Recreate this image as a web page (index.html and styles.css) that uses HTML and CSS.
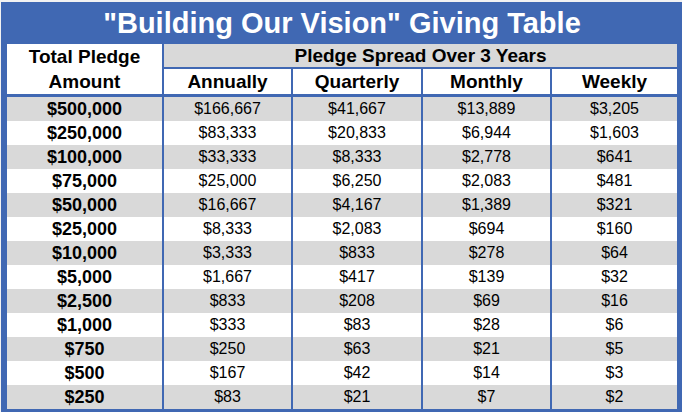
FILE: index.html
```html
<!DOCTYPE html>
<html lang="en">
<head>
<meta charset="utf-8">
<title>Building Our Vision Giving Table</title>
<link rel="stylesheet" href="styles.css">
</head>
<body>
<div class="sheet">
  <h1 class="title">"Building Our Vision" Giving Table</h1>
  <div class="head">
    <div class="h-total">Total Pledge<br>Amount</div>
    <div class="h-spread">Pledge Spread Over 3 Years</div>
    <div class="h-sub">Annually</div>
    <div class="h-sub">Quarterly</div>
    <div class="h-sub">Monthly</div>
    <div class="h-sub">Weekly</div>
  </div>
  <div class="body">
    <div class="row odd"><div class="c amt">$500,000</div><div class="c">$166,667</div><div class="c">$41,667</div><div class="c">$13,889</div><div class="c">$3,205</div></div>
    <div class="row"><div class="c amt">$250,000</div><div class="c">$83,333</div><div class="c">$20,833</div><div class="c">$6,944</div><div class="c">$1,603</div></div>
    <div class="row odd"><div class="c amt">$100,000</div><div class="c">$33,333</div><div class="c">$8,333</div><div class="c">$2,778</div><div class="c">$641</div></div>
    <div class="row"><div class="c amt">$75,000</div><div class="c">$25,000</div><div class="c">$6,250</div><div class="c">$2,083</div><div class="c">$481</div></div>
    <div class="row odd"><div class="c amt">$50,000</div><div class="c">$16,667</div><div class="c">$4,167</div><div class="c">$1,389</div><div class="c">$321</div></div>
    <div class="row"><div class="c amt">$25,000</div><div class="c">$8,333</div><div class="c">$2,083</div><div class="c">$694</div><div class="c">$160</div></div>
    <div class="row odd"><div class="c amt">$10,000</div><div class="c">$3,333</div><div class="c">$833</div><div class="c">$278</div><div class="c">$64</div></div>
    <div class="row"><div class="c amt">$5,000</div><div class="c">$1,667</div><div class="c">$417</div><div class="c">$139</div><div class="c">$32</div></div>
    <div class="row odd"><div class="c amt">$2,500</div><div class="c">$833</div><div class="c">$208</div><div class="c">$69</div><div class="c">$16</div></div>
    <div class="row"><div class="c amt">$1,000</div><div class="c">$333</div><div class="c">$83</div><div class="c">$28</div><div class="c">$6</div></div>
    <div class="row odd"><div class="c amt">$750</div><div class="c">$250</div><div class="c">$63</div><div class="c">$21</div><div class="c">$5</div></div>
    <div class="row"><div class="c amt">$500</div><div class="c">$167</div><div class="c">$42</div><div class="c">$14</div><div class="c">$3</div></div>
    <div class="row odd"><div class="c amt">$250</div><div class="c">$83</div><div class="c">$21</div><div class="c">$7</div><div class="c">$2</div></div>
  </div>
</div>
</body>
</html>
```

FILE: styles.css
```css
html, body {
  margin: 0;
  padding: 0;
  background: #f2f2f2;
}

body {
  padding: 2px 0 0 1px;
  font-family: "Liberation Sans", Arial, sans-serif;
  color: #000;
}

.sheet {
  width: 681px;
  box-sizing: border-box;
  background: #4068b3;
  padding: 0 5px 3px 6px;
}

.title {
  margin: 0;
  height: 42px;
  line-height: 42px;
  font-size: 29px;
  font-weight: bold;
  color: #fff;
  text-align: center;
}

.head {
  display: grid;
  grid-template-columns: 155px 127px 128px 127px 125px;
  grid-template-rows: 23px 25px;
  column-gap: 2px;
  row-gap: 2px;
  font-size: 19px;
  font-weight: bold;
  text-align: center;
}

.h-total {
  grid-row: 1 / 3;
  background: #fff;
  line-height: 25px;
  padding-top: 0;
  display: flex;
  flex-direction: column;
  justify-content: center;
}

.h-spread {
  grid-column: 2 / 6;
  background: #d9d9d9;
  line-height: 23px;
}

.h-sub {
  background: #fff;
  line-height: 26px;
}

.body {
  margin-top: 3px;
}

.row {
  display: grid;
  grid-template-columns: 155px 127px 128px 127px 125px;
  column-gap: 2px;
  height: 24px;
}

.c {
  background: #fff;
  text-align: center;
  font-size: 16px;
  line-height: 24px;
}

.row.odd .c {
  background: #d9d9d9;
}

.c.amt {
  font-weight: bold;
  font-size: 18px;
}
```
